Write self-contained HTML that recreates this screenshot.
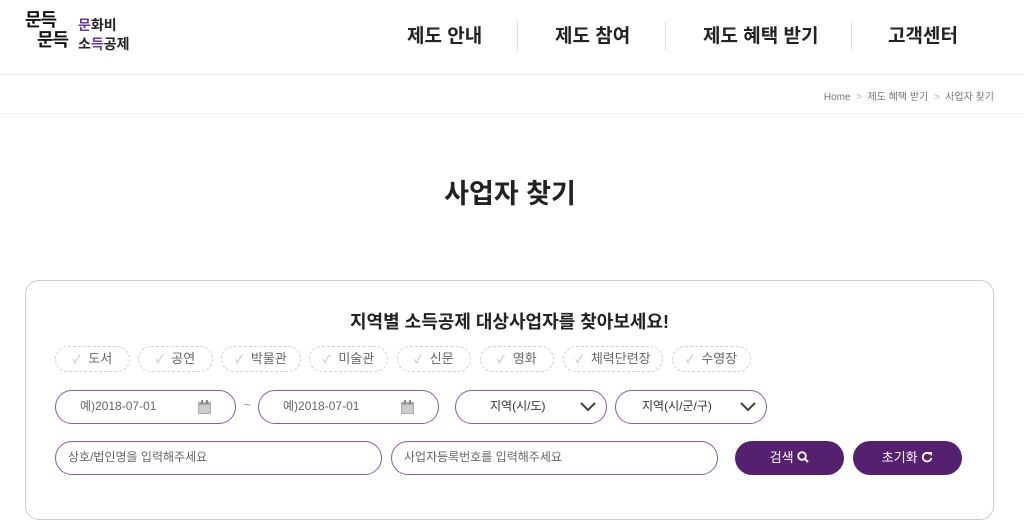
<!DOCTYPE html>
<html><head><meta charset="utf-8"><style>
*{margin:0;padding:0;box-sizing:border-box}
body{width:1024px;height:506px;overflow:hidden;background:#fff;font-family:"Liberation Sans","Noto Sans CJK KR",sans-serif;color:#222;position:relative}
.a{position:absolute}
.nav{top:24px;font-size:19px;font-weight:bold;color:#222;line-height:26px}
.sep{top:22px;width:1px;height:28px;background:#ddd}
.chip{top:346px;height:26px;border:1px dashed #d6c8df;border-radius:13px;font-size:13px;color:#666;line-height:24px;text-align:center}
.chip span{color:#bbb;font-size:11px;margin-right:8px}
.in{height:34px;border:1.5px solid #8a5aa6;border-radius:17px;font-size:12px;color:#666;line-height:31px}
.btn{top:441px;height:34px;border-radius:17px;background:#55206f;color:#fff;font-size:13px;line-height:34px;text-align:center}
</style></head><body>
<div class="a" style="left:25px;top:10px;font-size:18px;font-weight:bold;line-height:20px;letter-spacing:-1px;color:#111">문득<br><span style="margin-left:12px">문득</span></div>
<div class="a" style="left:78px;top:16px;font-size:14px;line-height:19px;font-weight:bold;color:#222"><span style="color:#6b3a97">문</span>화비<br>소<span style="color:#6b3a97">득</span>공제</div>
<div class="a nav" style="left:407px">제도 안내</div>
<div class="a sep" style="left:517px"></div>
<div class="a nav" style="left:555px">제도 참여</div>
<div class="a sep" style="left:665px"></div>
<div class="a nav" style="left:703px">제도 혜택 받기</div>
<div class="a sep" style="left:851px"></div>
<div class="a nav" style="left:888px">고객센터</div>
<div class="a" style="left:0;top:74px;width:1024px;height:1px;background:#e8e8e8"></div>
<div class="a" style="right:30px;top:88px;font-size:10px;color:#777">Home &nbsp;<span style="color:#bbb">&gt;</span>&nbsp; 제도 혜택 받기 &nbsp;<span style="color:#bbb">&gt;</span>&nbsp; 사업자 찾기</div>
<div class="a" style="left:0;top:113px;width:1024px;height:1px;background:#eee"></div>
<div class="a" style="left:0;width:1020px;top:172px;text-align:center;font-size:27px;font-weight:bold;color:#222">사업자 찾기</div>
<div class="a" style="left:25px;top:280px;width:969px;height:240px;border:1px solid #ccc;border-radius:14px"></div>
<div class="a" style="left:25px;width:969px;top:308px;text-align:center;font-size:18px;font-weight:bold;color:#222">지역별 소득공제 대상사업자를 찾아보세요!</div>
<div class="a chip" style="left:55px;width:75px"><span>✓</span>도서</div>
<div class="a chip" style="left:138px;width:75px"><span>✓</span>공연</div>
<div class="a chip" style="left:221px;width:80px"><span>✓</span>박물관</div>
<div class="a chip" style="left:309px;width:79px"><span>✓</span>미술관</div>
<div class="a chip" style="left:397px;width:74px"><span>✓</span>신문</div>
<div class="a chip" style="left:480px;width:74px"><span>✓</span>영화</div>
<div class="a chip" style="left:563px;width:100px"><span>✓</span>체력단련장</div>
<div class="a chip" style="left:672px;width:79px"><span>✓</span>수영장</div>
<div class="a in" style="left:55px;top:390px;width:181px;padding-left:24px">예)2018-07-01<svg class="a" style="left:142px;top:9px" width="13" height="14"><rect x="0" y="2" width="13" height="12" fill="#aaa"/><rect x="1" y="5" width="11" height="8" fill="#ccc"/><rect x="3" y="0" width="2" height="4" fill="#888"/><rect x="8" y="0" width="2" height="4" fill="#888"/></svg></div>
<div class="a" style="left:244px;top:398px;font-size:12px;color:#888">~</div>
<div class="a in" style="left:258px;top:390px;width:181px;padding-left:24px">예)2018-07-01<svg class="a" style="left:142px;top:9px" width="13" height="14"><rect x="0" y="2" width="13" height="12" fill="#aaa"/><rect x="1" y="5" width="11" height="8" fill="#ccc"/><rect x="3" y="0" width="2" height="4" fill="#888"/><rect x="8" y="0" width="2" height="4" fill="#888"/></svg></div>
<div class="a in" style="left:455px;top:390px;width:152px;padding-left:34px;color:#333">지역(시/도)<svg class="a" style="left:124px;top:11px" width="16" height="10"><path d="M1 1 L8 8 L15 1" stroke="#444" stroke-width="2" fill="none"/></svg></div>
<div class="a in" style="left:615px;top:390px;width:152px;padding-left:26px;color:#333">지역(시/군/구)<svg class="a" style="left:124px;top:11px" width="16" height="10"><path d="M1 1 L8 8 L15 1" stroke="#444" stroke-width="2" fill="none"/></svg></div>
<div class="a in" style="left:55px;top:441px;width:327px;padding-left:12px">상호/법인명을 입력해주세요</div>
<div class="a in" style="left:391px;top:441px;width:327px;padding-left:12px">사업자등록번호를 입력해주세요</div>
<div class="a btn" style="left:735px;width:109px">검색 <svg width="12" height="12" style="vertical-align:-1px"><circle cx="5" cy="5" r="3.8" stroke="#fff" stroke-width="1.8" fill="none"/><path d="M8 8 L11 11" stroke="#fff" stroke-width="2"/></svg></div>
<div class="a btn" style="left:853px;width:109px">초기화 <svg width="12" height="12" style="vertical-align:-1px"><path d="M9.5 3.5 A4.3 4.3 0 1 0 10.3 7" stroke="#fff" stroke-width="1.8" fill="none"/><path d="M7 1 L11 1 L11 5Z" fill="#fff"/></svg></div>
</body></html>
